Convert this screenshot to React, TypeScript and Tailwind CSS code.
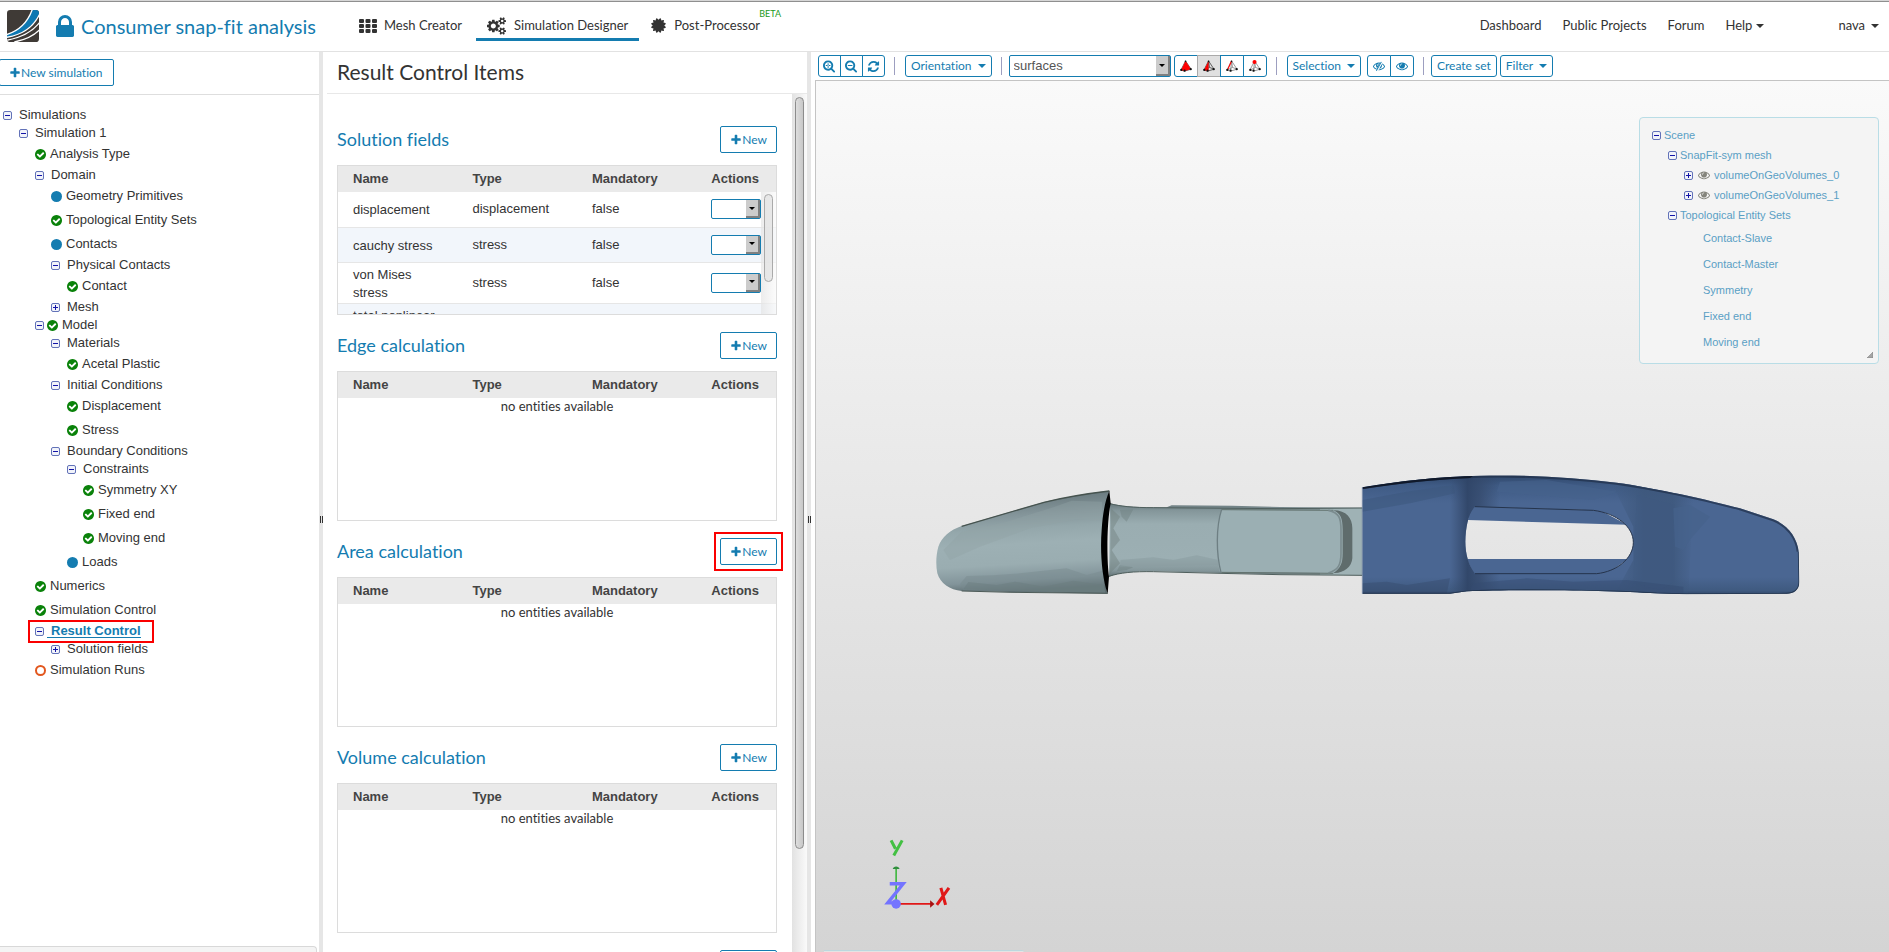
import React from "react";

const P = {
  plus: "M1600 736v192q0 40-28 68t-68 28h-416v416q0 40-28 68t-68 28h-192q-40 0-68-28t-28-68v-416h-416q-40 0-68-28t-28-68v-192q0-40 28-68t68-28h416v-416q0-40 28-68t68-28h192q40 0 68 28t28 68v416h416q40 0 68 28t28 68z",
  check: "M1412 734q0-28-18-46l-91-90q-19-19-45-19t-45 19l-408 407-226-226q-19-19-45-19t-45 19l-91 90q-18 18-18 46 0 27 18 45l362 362q19 19 45 19 27 0 46-19l543-543q18-18 18-45zm252 162q0 209-103 385.5t-279.5 279.5-385.5 103-385.5-103-279.5-279.5-103-385.5 103-385.5 279.5-279.5 385.5-103 385.5 103 279.5 279.5 103 385.5z",
  lock: "M640 768h512v-192q0-106-75-181t-181-75-181 75-75 181v192zm832 96v576q0 40-28 68t-68 28h-960q-40 0-68-28t-28-68v-576q0-40 28-68t68-28h32v-192q0-184 132-316t316-132 316 132 132 316v192h32q40 0 68 28t28 68z",
  certificate: "M1504 896l138 135q30 28 20 70-12 41-52 51l-188 48 53 186q12 41-19 70-29 31-70 19l-186-53-48 188q-10 40-51 52-12 2-19 2-31 0-51-22l-135-138-135 138q-28 30-70 20-41-11-51-52l-48-188-186 53q-41 12-70-19-31-29-19-70l53-186-188-48q-40-10-52-51-10-42 20-70l138-135-138-135q-30-28-20-70 12-41 52-51l188-48-53-186q-12-41 19-70 29-31 70-19l186 53 48-188q10-41 51-51 41-12 70 19l135 139 135-139q29-30 70-19 41 10 51 51l48 188 186-53q41-12 70 19 31 29 19 70l-53 186 188 48q40 10 52 51 10 42-20 70z",
  lens: "M1152 768q0-185-131.5-316.5t-316.5-131.5-316.5 131.5-131.5 316.5 131.5 316.5 316.5 131.5 316.5-131.5 131.5-316.5zm512 832q0 53-37.5 90.5t-90.5 37.5q-54 0-90-38l-343-342q-179 124-399 124-143 0-273.5-55.5t-225-150-150-225-55.5-273.5 55.5-273.5 150-225 225-150 273.5-55.5 273.5 55.5 225 150 150 225 55.5 273.5q0 220-124 399l343 343q37 37 37 90z",
  lensPlus: "M384 704h640v128h-640zM640 448h128v640h-128z",
  lensMinus: "M384 704h640v128h-640z",
  refresh: "M1639 1056q0 5-1 7-64 268-268 434.5t-478 166.5q-146 0-282.5-55t-243.5-157l-129 129q-19 19-45 19t-45-19-19-45v-448q0-26 19-45t45-19h448q26 0 45 19t19 45-19 45l-137 137q71 66 161 102t187 36q134 0 250-65t186-179q11-17 53-117 8-23 30-23h192q13 0 22.5 9.5t9.5 22.5zm25-800v448q0 26-19 45t-45 19h-448q-26 0-45-19t-19-45 19-45l138-138q-148-137-349-137-134 0-250 65t-186 179q-11 17-53 117-8 23-30 23h-199q-13 0-22.5-9.5t-9.5-22.5v-7q65-268 270-434.5t480-166.5q146 0 284 55.5t245 156.5l130-129q19-19 45-19t45 19 19 45z",
  eye: "M1664 960q-152-236-381-353 61 104 61 225 0 185-131.5 316.5t-316.5 131.5-316.5-131.5-131.5-316.5q0-121 61-225-229 117-381 353 133 205 333.5 326.5t434.5 121.5 434.5-121.5 333.5-326.5zm-720-384q0-20-14-34t-34-14q-125 0-214.5 89.5t-89.5 214.5q0 20 14 34t34 14 34-14 14-34q0-86 61-147t147-61q20 0 34-14t14-34zm848 384q0 34-20 69-140 230-376.5 368.5t-499.5 138.5-499.5-139-376.5-368q-20-35-20-69t20-69q140-229 376.5-368t499.5-139 499.5 139 376.5 368q20 35 20 69z",
  bigCog: "M896 896q0-106-75-181t-181-75-181 75-75 181 75 181 181 75 181-75 75-181zm384-91v185q0 10-7 19.5t-16 10.5l-155 24q-11 35-32 76 34 48 90 115 7 11 7 20 0 12-7 19-23 30-82.5 89.5t-78.5 59.5q-11 0-21-7l-115-90q-37 19-77 31-11 108-23 155-7 24-30 24h-186q-11 0-20-7.5t-10-17.5l-23-153q-34-10-75-31l-118 89q-7 7-20 7-11 0-21-8-144-133-144-160 0-9 7-19 10-14 41-53t47-61q-23-44-35-82l-152-24q-10-1-17-9.5t-7-19.5v-185q0-10 7-19.5t16-10.5l155-24q11-35 32-76-34-48-90-115-7-11-7-20 0-12 7-20 22-30 82-89t79-59q11 0 21 7l115 90q34-18 77-32 11-108 23-154 7-24 30-24h186q11 0 20 7.5t10 17.5l23 153q34 10 75 31l118-89q8-7 20-7 11 0 21 8 144 133 144 160 0 8-7 19-12 16-42 54t-45 60q23 48 34 82l152 23q10 2 17 10.5t7 19.5z",
  smallCog: "M1664 1408q0-52-38-90t-90-38-90 38-38 90q0 53 37.5 90.5t90.5 37.5 90.5-37.5 37.5-90.5zm256-70v140q0 16-149 31-12 27-30 52 51 113 51 138 0 4-4 7-122 71-124 71-8 0-46-47t-52-68q-20 2-30 2t-30-2q-14 21-52 68t-46 47q-2 0-124-71-4-3-4-7 0-25 51-138-18-25-30-52-149-15-149-31v-140q0-16 149-31 13-29 30-52-51-113-51-138 0-4 4-7 4-2 35-20t59-34 30-16q8 0 46 46.5t52 67.5q20-2 30-2t30 2q51-71 92-112l6-2q4 0 124 70 4 3 4 7 0 25-51 138 17 23 30 52 149 15 149 31z",
};

function Glyph({ d, className }: { d: string; className: string }) {
  return (
    <svg viewBox="0 0 1792 1792" className={className} fill="currentColor" fillRule="evenodd" aria-hidden="true">
      <path d={d} />
    </svg>
  );
}

function Cogs() {
  return (
    <svg viewBox="0 0 1920 1792" className="h-[18px] w-[19px]" fill="currentColor" fillRule="evenodd" aria-hidden="true">
      <path d={P.bigCog} />
      <path d={P.smallCog} />
      <path d={P.smallCog} transform="translate(0 -1024)" />
    </svg>
  );
}

function GridIcon() {
  return (
    <svg viewBox="0 0 18 14" className="h-[14px] w-[18px]" fill="currentColor" aria-hidden="true">
      {[0, 5, 10].map((y) => [0, 6.5, 13].map((x) => <rect key={`${x}-${y}`} x={x} y={y} width="5" height="4" rx="1" />))}
    </svg>
  );
}

function EyeSlash({ className }: { className: string }) {
  return (
    <svg viewBox="0 0 1792 1792" className={className} fill="currentColor" fillRule="evenodd" aria-hidden="true">
      <path d={P.eye} />
      <path d="M1330 300L560 1640" stroke="#fff" strokeWidth="300" />
      <path d="M1250 280L500 1620" stroke="currentColor" strokeWidth="150" />
    </svg>
  );
}

function Logo() {
  return (
    <svg viewBox="0 0 96 96" className="h-8 w-8 shrink-0" role="img" aria-label="Home">
      <clipPath id="logo-clip"><rect width="96" height="96" rx="10" /></clipPath>
      <g clipPath="url(#logo-clip)">
        <rect width="96" height="96" fill="#3f3a36" />
        <path d="M76 -2C64 32 44 60 -2 74L-2 84C50 74 84 44 98 8L98 -2Z" fill="#0d78b2" />
        <path d="M76 -2C64 32 44 60 -2 74" fill="none" stroke="#fff" strokeWidth="4" />
        <path d="M99 10C82 48 50 74 -2 82" fill="none" stroke="#fff" strokeWidth="4" />
        <path d="M99 36C78 64 48 82 -2 91" fill="none" stroke="#fff" strokeWidth="4" />
        <path d="M99 58C82 76 60 88 22 96" fill="none" stroke="#fff" strokeWidth="4" />
      </g>
    </svg>
  );
}

function Caret() {
  return <span aria-hidden="true" className="inline-block border-x-4 border-t-4 border-x-transparent border-t-current" />;
}

function Toggle({ open }: { open: boolean }) {
  return (
    <svg viewBox="0 0 9 9" className="h-[9px] w-[9px] shrink-0" aria-hidden="true">
      <rect x="0.5" y="0.5" width="8" height="8" rx="1.5" fill="#f1f3fa" stroke="#6272b8" />
      <path d={open ? "M2 4.5H7" : "M2 4.5H7M4.5 2V7"} stroke="#1414a8" strokeWidth="1" />
    </svg>
  );
}

type Mark = "ok" | "dot" | "ring";
type Item = { label: string; mark?: Mark; open?: boolean; active?: boolean; children?: Item[] };

const tree: Item[] = [
  { label: "Simulations", open: true, children: [
    { label: "Simulation 1", open: true, children: [
      { label: "Analysis Type", mark: "ok" },
      { label: "Domain", open: true, children: [
        { label: "Geometry Primitives", mark: "dot" },
        { label: "Topological Entity Sets", mark: "ok" },
        { label: "Contacts", mark: "dot" },
        { label: "Physical Contacts", open: true, children: [{ label: "Contact", mark: "ok" }] },
        { label: "Mesh", open: false },
      ] },
      { label: "Model", mark: "ok", open: true, children: [
        { label: "Materials", open: true, children: [{ label: "Acetal Plastic", mark: "ok" }] },
        { label: "Initial Conditions", open: true, children: [
          { label: "Displacement", mark: "ok" },
          { label: "Stress", mark: "ok" },
        ] },
        { label: "Boundary Conditions", open: true, children: [
          { label: "Constraints", open: true, children: [
            { label: "Symmetry XY", mark: "ok" },
            { label: "Fixed end", mark: "ok" },
            { label: "Moving end", mark: "ok" },
          ] },
          { label: "Loads", mark: "dot" },
        ] },
      ] },
      { label: "Numerics", mark: "ok" },
      { label: "Simulation Control", mark: "ok" },
      { label: "Result Control", open: true, active: true, children: [{ label: "Solution fields", open: false }] },
      { label: "Simulation Runs", mark: "ring" },
    ] },
  ] },
];

function MarkIcon({ mark }: { mark: Mark }) {
  if (mark === "ok") return <svg viewBox="128 128 1536 1536" className="h-[11px] w-[11px] shrink-0" fill="#0a820a"><path d={P.check} /></svg>;
  if (mark === "dot") return <span className="h-[11px] w-[11px] shrink-0 rounded-full bg-[#147cb0]" />;
  return <span className="h-[11px] w-[11px] shrink-0 rounded-full border-2 border-[#e2571e]" />;
}

function TreeNode({ item }: { item: Item }) {
  const folder = item.open !== undefined;
  return (
    <li>
      <div className={folder ? "relative flex h-[18px] items-center" : "flex h-6 items-center"}>
        {item.active && <span aria-hidden="true" className="pointer-events-none absolute -top-0.5 -left-[7px] h-[23px] w-[126px] border-2 border-[#fa0000]" />}
        {folder && <Toggle open={!!item.open} />}
        {item.mark && <span className={folder ? "ml-[3px] flex" : "flex"}><MarkIcon mark={item.mark} /></span>}
        {item.active ? (
          <a href="#" className="ml-[3px] border-b border-[#147cb0] pl-1 leading-[13px] font-bold text-[#147cb0]">{item.label}</a>
        ) : (
          <a href="#" className={item.mark ? "ml-1" : "ml-[7px]"}>{item.label}</a>
        )}
      </div>
      {item.children && <ul className="pl-4">{item.children.map((c) => <TreeNode key={c.label} item={c} />)}</ul>}
    </li>
  );
}

function Splitter() {
  return (
    <div className="flex w-1 shrink-0 items-center justify-center bg-[#e6e6e6] pt-[34px]">
      <span className="h-[7px] w-[3px] border-x border-[#333]" />
    </div>
  );
}

function ArrowBox() {
  return (
    <span aria-hidden="true" className="pointer-events-none absolute top-px right-px bottom-px flex w-[14px] items-center justify-center border-r-2 border-b-2 border-[#808080] bg-[#cccccc]">
      <span className="border-x-[3px] border-t-[3px] border-x-transparent border-t-black" />
    </span>
  );
}

function ActionSelect({ label }: { label: string }) {
  return (
    <span className="relative flex h-5 w-[50px]">
      <select aria-label={label} className="w-full appearance-none rounded-xs border border-[#147cb0] bg-white">
        <option value=""></option>
        <option>Edit</option>
        <option>Remove</option>
      </select>
      <ArrowBox />
    </span>
  );
}

function NewButton() {
  return (
    <button className="flex h-[27px] w-[57px] items-center justify-center rounded-xs border border-[#147cb0] bg-white text-[12px] text-[#147cb0]">
      <Glyph d={P.plus} className="h-3 w-3" />New
    </button>
  );
}

const fields = [
  { name: "displacement", type: "displacement", mandatory: "false" },
  { name: "cauchy stress", type: "stress", mandatory: "false" },
  { name: "von Mises stress", type: "stress", mandatory: "false" },
  { name: "total nonlinear strain", type: "strain", mandatory: "false" },
];

function Section({ title, rows, marked }: { title: string; rows?: typeof fields; marked?: boolean }) {
  return (
    <section className="mb-[17px]">
      <div className="mb-3 flex h-[27px] items-center justify-between">
        <h2 className="text-[18px] text-[#147cb0]">{title}</h2>
        <div className="relative">
          <NewButton />
          {marked && <span aria-hidden="true" className="pointer-events-none absolute -inset-x-[6px] -inset-y-[6px] border-2 border-[#fa0000]" />}
        </div>
      </div>
      <div className="relative h-[150px] overflow-hidden border border-[#dcdcdc]">
        <table className="w-full table-fixed border-collapse text-left font-['Liberation_Sans',sans-serif] text-[13px]">
          <thead>
            <tr className="h-[26px] bg-[#eaeaea] text-[#444]">
              <th className="w-3/11 py-0 pl-[15px]">Name</th>
              <th className="w-3/11 py-0 pl-[15px]">Type</th>
              <th className="w-3/11 py-0 pl-[15px]">Mandatory</th>
              <th className="py-0 pl-[15px]">Actions</th>
            </tr>
          </thead>
          <tbody>
            {rows ? rows.map((r) => (
              <tr key={r.name} className="h-[35px] border-b border-[#e6e6e6] leading-[18px] even:bg-[#f2f6fb]">
                <td className="pt-[3px] pr-4 pb-px pl-[15px]">{r.name}</td>
                <td className="py-[2px] pl-[15px]">{r.type}</td>
                <td className="py-[2px] pl-[15px]">{r.mandatory}</td>
                <td className="py-[2px] pl-[15px]"><ActionSelect label={`Actions for ${r.name}`} /></td>
              </tr>
            )) : (
              <tr><td colSpan={4} className="p-0 text-center font-[Lato,sans-serif] text-[13px] leading-4">no entities available</td></tr>
            )}
          </tbody>
        </table>
        {rows && (
          <div aria-hidden="true" className="absolute top-[26px] right-0 bottom-0 w-[15px] bg-linear-to-r from-[#e4e4e4]/70 to-[#fafafa]/70 px-[3px] pt-[2px]">
            <div className="h-[88px] rounded-full border border-[#aaa] bg-[#e4e4e4]/80" />
          </div>
        )}
      </div>
    </section>
  );
}

function Separator({ tight }: { tight?: boolean }) {
  return <span aria-hidden="true" className={`${tight ? "mr-[7px]" : "mr-[10px]"} ml-[9px] h-[18px] w-px shrink-0 bg-[#9d9fc0]`} />;
}

const toolBtn = "flex h-[22px] items-center justify-center gap-1.5 rounded-[3px] border border-[#147cb0] bg-white px-[5px] text-[12px] whitespace-nowrap text-[#147cb0]";

function Pick({ kind }: { kind: "volume" | "face" | "edge" | "node" }) {
  const solid = kind === "volume" || kind === "face";
  return (
    <svg viewBox="0 0 13 13" className="h-3 w-3" aria-hidden="true">
      <path d="M6 1L12 10L5 12L1 11ZM6 1L5 12M1 11L7 8L12 10M6 1L7 8" fill={solid ? "none" : "#fff"} stroke={solid ? "#333" : "#777"} strokeWidth="0.8" />
      {kind === "volume" && <path d="M6 1L12 10L5 12L1 11Z" fill="#f00" />}
      {kind === "face" && <path d="M6 1L6 12L1 11Z" fill="#f00" />}
      {kind === "edge" && <path d="M6 1L2 10" stroke="#f00" strokeWidth="1.2" />}
      <circle cx="6" cy={kind === "node" ? 2.2 : 1.4} r={kind === "node" ? 2.2 : 0.9} fill={kind === "node" ? "#f00" : "#111"} />
      <circle cx="11.6" cy="10" r="1.2" fill="#111" />
      <circle cx="5" cy="11.6" r="1.2" fill="#111" />
      <circle cx="1.4" cy="10.8" r="1.2" fill="#111" />
    </svg>
  );
}

function SnapFitModel() {
  return (
    <svg viewBox="0 0 2700 510" className="absolute top-[369px] left-[104px] h-[170px] w-[900px]" role="img" aria-label="Snap-fit model">
      <defs>
        <linearGradient id="tip" x1="0.1" y1="0" x2="0.2" y2="1">
          <stop offset="0" stopColor="#5e6e72" /><stop offset="0.27" stopColor="#84959a" /><stop offset="0.4" stopColor="#94a7ab" />
          <stop offset="0.55" stopColor="#9db0b4" /><stop offset="0.74" stopColor="#9aadb1" /><stop offset="0.9" stopColor="#82949a" /><stop offset="1" stopColor="#5d6d70" />
        </linearGradient>
        <linearGradient id="shaft" x1="0" y1="0" x2="0" y2="1">
          <stop offset="0" stopColor="#667679" /><stop offset="0.1" stopColor="#84969a" /><stop offset="0.28" stopColor="#9aadb1" />
          <stop offset="0.75" stopColor="#9cafb3" /><stop offset="0.92" stopColor="#84969a" /><stop offset="1" stopColor="#5f6f72" />
        </linearGradient>
        <linearGradient id="body" x1="0" y1="0" x2="0" y2="1">
          <stop offset="0" stopColor="#2e4567" /><stop offset="0.1" stopColor="#3f5b85" /><stop offset="0.24" stopColor="#4a6692" />
          <stop offset="0.84" stopColor="#4a6692" /><stop offset="0.95" stopColor="#3f5a80" /><stop offset="1" stopColor="#2c4160" />
        </linearGradient>
        <linearGradient id="waist" x1="0" y1="0" x2="1" y2="0">
          <stop offset="0" stopColor="#34496b" stopOpacity="0" /><stop offset="0.35" stopColor="#2f4466" stopOpacity="0.9" />
          <stop offset="0.6" stopColor="#34496b" stopOpacity="0.75" /><stop offset="1" stopColor="#34496b" stopOpacity="0" />
        </linearGradient>
        <linearGradient id="shoulder" x1="0" y1="0" x2="1" y2="0">
          <stop offset="0" stopColor="#3d577b" stopOpacity="0" /><stop offset="0.4" stopColor="#3d577b" stopOpacity="0.8" />
          <stop offset="0.75" stopColor="#3d577b" stopOpacity="0.8" /><stop offset="1" stopColor="#3d577b" stopOpacity="0" />
        </linearGradient>
        <clipPath id="bodyClip">
          <path clipRule="evenodd" d="M67 112C180 92 300 80 420 77C560 73 700 84 830 98C950 115 1100 148 1200 175L1300 208C1345 225 1372 265 1376 305L1378 395C1378 420 1360 431 1340 431L1040 433L950 430C800 420 500 418 380 424L330 431L67 431ZM405 170C385 190 377 230 376 275C376 310 385 345 405 371L770 371C830 365 880 325 880 277C880 230 830 190 760 181Z" />
        </clipPath>
      </defs>
      <path d="M570 160C600 168 640 172 700 172L740 172L755 166L935 167L1080 171L1327 173L1327 376L1080 373L900 369L700 364C640 364 600 368 567 380Z" fill="url(#shaft)" />
      <path d="M1200 174H1327V375H1200Z" fill="#9fb2b5" />
      <path d="M573 175L600 200L580 235L600 270L575 300L600 340L570 370Z" fill="#71817f" opacity="0.45" />
      <path d="M600 180L640 178L620 215L605 200ZM600 345L640 352L620 360L590 364Z" fill="#6b7c7e" opacity="0.4" />
      <path d="M602 330L700 322L760 330L830 316L895 330L895 345L600 350Z" fill="#8b9da1" opacity="0.55" />
      <path d="M905 180L1240 181C1280 184 1295 205 1295 235V325C1292 352 1270 368 1240 369L900 366C888 330 888 220 905 180Z" fill="#9bafb3" />
      <path d="M905 178C888 230 888 310 903 367" fill="none" stroke="#6e7f83" strokeWidth="4" />
      <path d="M905 179L1080 180L1240 181M905 367L1240 370" fill="none" stroke="#63736f" strokeWidth="3" />
      <path d="M1240 181C1280 181 1297 205 1297 235V325C1295 352 1270 371 1240 369C1262 355 1268 340 1268 310V240C1268 205 1262 190 1240 181Z" fill="#5f6c6c" />
      <path d="M1225 181C1258 188 1263 205 1263 240V310C1263 345 1255 360 1225 369" fill="none" stroke="#7b8c8f" strokeWidth="5" />
      <path d="M570 161C600 169 640 173 700 173L1080 176L1327 174M567 379C600 368 640 364 700 365L900 370L1080 374L1327 376" fill="none" stroke="#4f5f5d" strokeWidth="3" />
      <path d="M568 122C500 130 430 142 372 156L125 228C90 240 65 262 55 290C48 315 47 345 52 370C60 400 90 420 125 423L270 426L563 431C555 400 548 330 548 280C548 220 555 170 568 122Z" fill="url(#tip)" />
      <path d="M546 155L455 152L400 172L260 215L125 245L70 300L90 330L180 290L330 235L470 208L546 212Z" fill="#90a2a6" opacity="0.4" />
      <path d="M120 402L140 378L220 376L300 370L440 355L500 375L548 362L555 428L270 424L130 421Z" fill="#788a8d" opacity="0.45" />
      <path d="M130 418L145 396L230 405L285 395L370 410L460 392L550 405L556 428Z" fill="#6b7c7f" opacity="0.45" />
      <path d="M568 123C500 131 430 143 372 157L125 229" fill="none" stroke="#46534f" strokeWidth="4" />
      <path d="M125 423L270 427L563 430" fill="none" stroke="#4d5b58" strokeWidth="3" />
      <path d="M568 122L572 160C560 220 560 330 567 380L563 431C545 380 540 300 545 240C548 190 556 150 568 122Z" fill="#000" />
      <g transform="translate(1260 0)">
        <path d="M390 168L780 181L862 224L384 210ZM381 327H864L800 372H400Z" fill="#4a6692" />
        <g clipPath="url(#bodyClip)">
          <rect x="60" y="70" width="1325" height="370" fill="url(#body)" />
          <path d="M67 150L200 125L340 105L345 130L210 160L67 185Z" fill="#3e597f" opacity="0.6" />
          <path d="M330 80H480V430H330Z" fill="url(#waist)" />
          <path d="M810 90L1060 140L1045 440H820L880 330V230Z" fill="url(#shoulder)" />
          <path d="M890 135L1003 165V395L960 420L880 400Z" fill="#3f5a80" opacity="0.3" />
          <path d="M1000 175L1050 165L1110 200L1049 270L1030 300L1005 290Z" fill="#46628c" opacity="0.7" />
          <path d="M480 95L620 90L740 110L830 125L760 150L470 125Z" fill="#46628c" opacity="0.6" />
          <path d="M67 400L140 395L200 405L330 385L320 431H67Z" fill="#34496a" opacity="0.4" />
          <path d="M400 400L560 385L700 395L860 390L1030 410V440H380Z" fill="#354c70" opacity="0.45" />
          <path d="M67 112C180 92 300 80 420 77C560 73 700 84 830 98C950 115 1100 148 1200 175L1300 208C1345 225 1372 265 1376 305" fill="none" stroke="#1f2f49" strokeWidth="12" opacity="0.7" />
          <path d="M67 112C180 90 260 82 400 77L390 84C280 89 180 101 67 117Z" fill="#10192a" />
          <path d="M1376 305L1378 395C1378 420 1360 431 1340 431L1040 433L950 430C800 420 500 418 380 424L330 431H67" fill="none" stroke="#24364f" strokeWidth="5" />
        </g>
        <path d="M405 170L760 181C830 190 880 230 880 277C880 325 830 365 770 371H405" fill="none" stroke="#25344c" strokeWidth="3" />
        <path d="M67 112V431" stroke="#62789c" strokeWidth="2" />
      </g>
    </svg>
  );
}

function Axes() {
  return (
    <svg viewBox="0 0 220 220" className="absolute bottom-[42px] left-[65px] h-[74px] w-[74px]" role="img" aria-label="Axes" fill="none">
      <path d="M45 96V196" stroke="#43b843" strokeWidth="5" />
      <path d="M35 98C36 88 54 88 55 98Z" fill="#2f8f3d" />
      <path d="M30 13L43 38M63 13L38 58" stroke="#43c043" strokeWidth="9" />
      <path d="M50 202H150" stroke="#e01818" strokeWidth="5" />
      <path d="M146 191L159 202L146 213Z" fill="#a81010" />
      <path d="M178 154L192 205M202 154L166 205" stroke="#e01818" strokeWidth="9" />
      <path d="M26 142H66L20 199H56" stroke="#7474ff" strokeWidth="10" />
      <circle cx="45" cy="202" r="14" fill="#7474ff" />
    </svg>
  );
}

function SceneRow({ label, indent, open, eye, tall }: { label: string; indent: string; open?: boolean; eye?: boolean; tall?: boolean }) {
  return (
    <li className={`flex items-center gap-[3px] ${tall ? "h-[26px]" : "h-5"} ${indent}`}>
      {open !== undefined && <Toggle open={open} />}
      {eye && <Glyph d={P.eye} className="mr-px ml-[2px] h-3 w-3 text-[#85857c]" />}
      <a href="#">{label}</a>
    </li>
  );
}

export default function App() {
  return (
    <div className="flex h-screen flex-col overflow-hidden bg-white font-[Lato,sans-serif] text-[13px] text-[#333] [font-variant-ligatures:none]">
      <header className="flex h-[52px] shrink-0 items-center border-b border-[#e2e2e2] bg-white pl-[7px] shadow-[inset_0_1px_0_#d6d6d6,inset_0_2px_0_#8f8f8f]">
        <Logo />
        <a href="#" className="ml-[17px] flex items-center text-[20px] text-[#147cb0]">
          <svg viewBox="320 128 1152 1408" className="mr-[7px] h-[22px] w-[18px]" fill="currentColor" fillRule="evenodd" aria-hidden="true"><path d={P.lock} /></svg>
          Consumer snap-fit analysis
        </a>
        <nav className="ml-[33px] flex">
          <a href="#" className="mr-1 flex h-[30px] items-center gap-[7px] px-[10px]"><GridIcon />Mesh Creator</a>
          <a href="#" className="flex h-[30px] items-center gap-2 border-b-3 border-[#147cb0] px-[11px] pt-[3px]"><Cogs />Simulation Designer</a>
          <a href="#" className="relative flex h-[30px] items-center gap-[7px] px-[11px]">
            <Glyph d={P.certificate} className="h-[17px] w-[17px]" />Post-Processor
            <sup className="absolute -top-0.5 -right-[10px] text-[9px] leading-none text-[#1c9a1c]">BETA</sup>
          </a>
        </nav>
        <nav className="ml-auto flex gap-[21px] pr-[10px]">
          <a href="#">Dashboard</a>
          <a href="#">Public Projects</a>
          <a href="#">Forum</a>
          <a href="#" className="flex items-center gap-1">Help <Caret /></a>
          <a href="#" className="ml-[53px] flex items-center gap-1.5">nava <Caret /></a>
        </nav>
      </header>

      <main className="flex min-h-0 grow">
        <aside className="flex w-[319px] shrink-0 flex-col">
          <div className="flex h-[43px] shrink-0 items-start border-b border-[#dedede] pt-[7px]">
            <button className="-ml-px flex h-[27px] items-center rounded-xs border border-[#147cb0] pr-[10px] pl-[9px] text-[12px] text-[#147cb0]">
              <Glyph d={P.plus} className="h-3 w-3" />New simulation
            </button>
          </div>
          <ul className="grow pt-[11px] pl-[3px] font-['Liberation_Sans',sans-serif] text-[13px]">
            {tree.map((t) => <TreeNode key={t.label} item={t} />)}
          </ul>
          <div className="mr-0.5 h-1.5 shrink-0 rounded-tr border-t border-r border-[#d8d8d8] bg-[#f4f4f4]" />
        </aside>
        <Splitter />
        <section className="flex w-[484px] shrink-0 flex-col">
          <div className="ml-1 flex h-[42px] shrink-0 items-center border-b border-[#e8e8e8] pb-0.5 pl-[10px]">
            <h1 className="text-[21px] leading-6 text-[#333]">Result Control Items</h1>
          </div>
          <div className="flex min-h-0 grow">
            <div className="grow overflow-hidden pt-8 pr-[15px] pl-[14px]">
              <Section title="Solution fields" rows={fields} />
              <Section title="Edge calculation" />
              <Section title="Area calculation" marked />
              <Section title="Volume calculation" />
              <Section title="Point data" />
            </div>
            <div aria-hidden="true" className="w-[15px] shrink-0 bg-linear-to-r from-[#e2e2e2] to-[#fafafa] px-[3px] pt-[3px]">
              <div className="h-[88%] rounded-full border border-[#8c8c8c] bg-linear-to-r from-[#dedede] to-[#c8c8c8]" />
            </div>
          </div>
        </section>
        <Splitter />
        <section className="flex min-w-0 grow flex-col pl-1">
          <div className="flex h-7 shrink-0 items-center pl-[3px]">
            <div className="flex">
              <button aria-label="Zoom in" className={`${toolBtn} w-[23px] rounded-r-none`}><Glyph d={P.lens + P.lensPlus} className="h-[13px] w-[13px] shrink-0" /></button>
              <button aria-label="Zoom out" className={`${toolBtn} -ml-px w-[23px] rounded-none`}><Glyph d={P.lens + P.lensMinus} className="h-[13px] w-[13px] shrink-0" /></button>
              <button aria-label="Reset view" className={`${toolBtn} -ml-px w-[23px] rounded-l-none`}><Glyph d={P.refresh} className="h-[13px] w-[13px] shrink-0" /></button>
            </div>
            <Separator />
            <button className={toolBtn}>Orientation <Caret /></button>
            <Separator tight />
            <span className="relative flex h-[22px] w-[162px] shrink-0">
              <select aria-label="Render mode" className="w-full appearance-none rounded-xs border border-[#147cb0] bg-white px-1 font-['Liberation_Sans',sans-serif] text-[13px] text-[#555]">
                <option>surfaces</option>
                <option>wireframe</option>
              </select>
              <ArrowBox />
            </span>
            <div className="ml-[3px] flex">
              <button aria-label="Pick volumes" className={`${toolBtn} rounded-r-none`}><Pick kind="volume" /></button>
              <button aria-label="Pick faces" className="-ml-px flex h-[22px] items-center border border-[#aaa] bg-[#e0e0e0] px-[5px]"><Pick kind="face" /></button>
              <button aria-label="Pick edges" className={`${toolBtn} -ml-px rounded-none`}><Pick kind="edge" /></button>
              <button aria-label="Pick nodes" className={`${toolBtn} -ml-px rounded-l-none`}><Pick kind="node" /></button>
            </div>
            <Separator />
            <button className={toolBtn}>Selection <Caret /></button>
            <div className="ml-1.5 flex">
              <button aria-label="Hide selected" className={`${toolBtn} rounded-r-none`}><EyeSlash className="h-3 w-3" /></button>
              <button aria-label="Show all" className={`${toolBtn} -ml-px rounded-l-none`}><Glyph d={P.eye} className="h-3 w-3" /></button>
            </div>
            <Separator tight />
            <button className={toolBtn}>Create set</button>
            <button className={`${toolBtn} ml-[3px]`}>Filter <Caret /></button>
          </div>
          <div className="relative grow overflow-hidden border-t border-l border-[#c4c4c4] bg-linear-to-b from-[#fafafa] to-[#d4d4d4]">
            <SnapFitModel />
            <Axes />
            <div className="absolute top-[36px] right-[10px] w-60 rounded-[4px] border border-[#b9dde6] bg-[#f4f4f4] pt-[7px] pb-2 pl-3 font-['Liberation_Sans',sans-serif] text-[11px] text-[#5a9fc4]">
              <ul>
                <SceneRow label="Scene" indent="" open />
                <SceneRow label="SnapFit-sym mesh" indent="pl-4" open />
                <SceneRow label="volumeOnGeoVolumes_0" indent="pl-8" open={false} eye />
                <SceneRow label="volumeOnGeoVolumes_1" indent="pl-8" open={false} eye />
                <SceneRow label="Topological Entity Sets" indent="pl-4" open />
                <SceneRow label="Contact-Slave" indent="pl-[51px]" tall />
                <SceneRow label="Contact-Master" indent="pl-[51px]" tall />
                <SceneRow label="Symmetry" indent="pl-[51px]" tall />
                <SceneRow label="Fixed end" indent="pl-[51px]" tall />
                <SceneRow label="Moving end" indent="pl-[51px]" tall />
              </ul>
              <svg viewBox="0 0 6 6" className="absolute right-[5px] bottom-[5px] h-1.5 w-1.5" aria-hidden="true"><path d="M6 0V6H0Z" fill="#a5a5a5" stroke="#777" strokeWidth="0.5" /></svg>
            </div>
            <div className="absolute bottom-0 left-2 h-0.5 w-[200px] rounded-tr border-t border-[#bcd7de] bg-[#e4e4e4]" />
          </div>
        </section>
      </main>
    </div>
  );
}
